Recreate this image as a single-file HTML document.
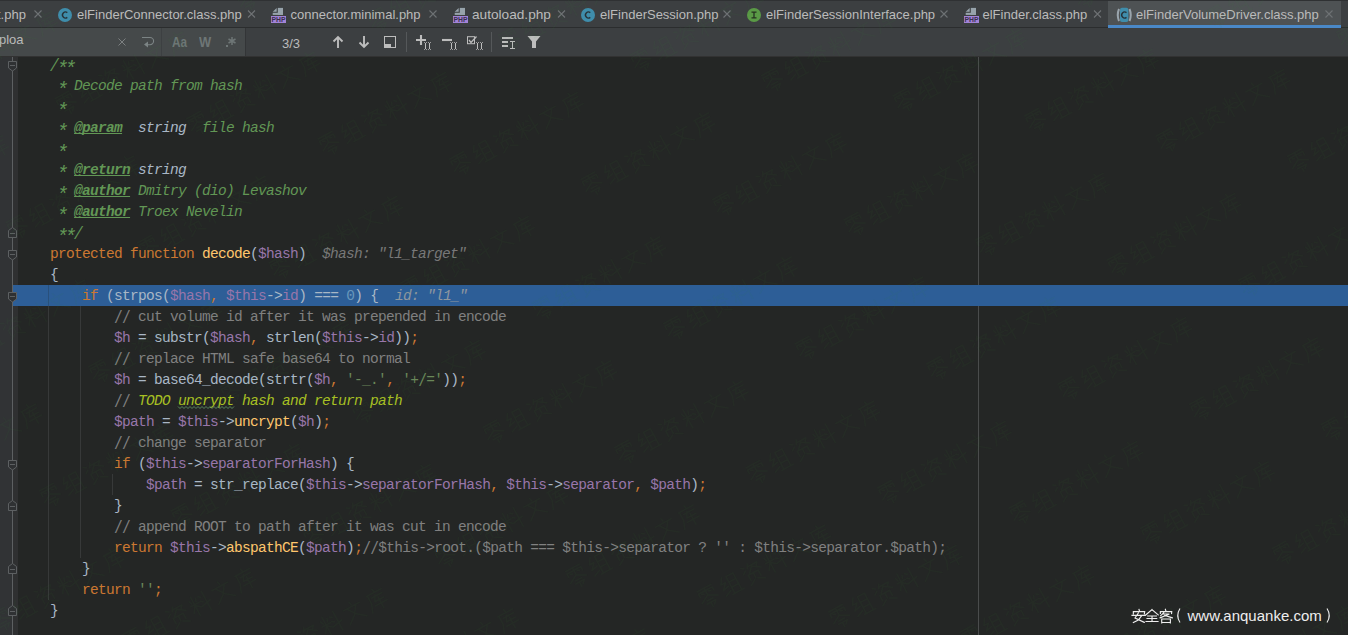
<!DOCTYPE html>
<html><head><meta charset="utf-8">
<style>
*{margin:0;padding:0;box-sizing:border-box}
html,body{width:1348px;height:635px;overflow:hidden;background:#242625}
body{position:relative;font-family:"Liberation Sans",sans-serif}
.abs{position:absolute}
#tabs{left:0;top:0;width:1348px;height:28px;background:#3C3F41;border-top:1px solid #2F3133}
#tabsep{left:0;top:27px;width:1348px;height:1px;background:#2B2D2E}
.tt{position:absolute;top:6px;font-size:13px;line-height:16px;color:#BBBBBB;white-space:pre}
.x{position:absolute;top:10px;width:8px;height:8px}
#search{left:0;top:28px;width:1348px;height:28px;background:#3C3F41}
#sfield{left:0;top:28px;width:245px;height:28px;background:#45494A}
#editor{left:0;top:56px;width:1348px;height:579px;background:#242625}
#gutter{left:0;top:56px;width:18px;height:579px;background:#313335}
#gutter2{left:13px;top:56px;width:5px;height:579px;background:#2F3031}
#margin{left:978px;top:56px;width:1px;height:579px;background:#4A4C4C}
#hl{left:13px;top:285px;width:1335px;height:21px;background:#2D5E97}
.ln{position:absolute;left:50px;height:21px;font-family:"Liberation Mono",monospace;font-size:14.5px;letter-spacing:-0.7px;line-height:21px;white-space:pre;color:#A9B7C6}
.k{color:#CC7832}.v{color:#9876AA}.f{color:#FFC66D}.n{color:#6897BB}.s{color:#6A8759}
.c{color:#808080}.d{color:#629755;font-style:italic}.dt{color:#629755;font-weight:bold;text-decoration:underline;text-decoration-skip-ink:none;text-underline-offset:1px;font-style:italic}
.dty{color:#A9B7C6;font-style:italic}.h{color:#787878;font-style:italic}.todo{color:#A8C023;font-style:italic}
.ast{display:inline-block;font-weight:normal;transform:translateY(5px) scale(1.35)}
.sl{display:inline-block;font-weight:normal;transform:translateY(1px) scaleY(1.28)}
.guide{position:absolute;width:1px;background:#373939}
</style></head><body>
<div id="tabs" class="abs"></div>
<div id="tabsep" class="abs"></div>
<div id="search" class="abs"></div>
<div id="sfield" class="abs"></div>
<!--CHROME-->
<div class="abs" style="left:1108px;top:1px;width:233px;height:26px;background:#4E5254"></div>
<div class="abs" style="left:1108px;top:25px;width:233px;height:3px;background:#4A88C7"></div>
<div class="tt" style="left:-3px;top:7px;font-size:13px;color:#BBBBBB;">t.php</div>
<div class="tt" style="left:77px;top:7px;font-size:13px;color:#BBBBBB;">elFinderConnector.class.php</div>
<div class="tt" style="left:290.5px;top:7px;font-size:13px;color:#BBBBBB;">connector.minimal.php</div>
<div class="tt" style="left:472px;top:7px;font-size:13px;color:#BBBBBB;transform:scaleX(1.05);transform-origin:0 0">autoload.php</div>
<div class="tt" style="left:600px;top:7px;font-size:13px;color:#BBBBBB;">elFinderSession.php</div>
<div class="tt" style="left:766px;top:7px;font-size:13px;color:#BBBBBB;">elFinderSessionInterface.php</div>
<div class="tt" style="left:982.5px;top:7px;font-size:13px;color:#BBBBBB;">elFinder.class.php</div>
<div class="tt" style="left:1136px;top:7px;font-size:13px;color:#BBBBBB;">elFinderVolumeDriver.class.php</div>
<svg class="abs" style="left:0;top:0" width="1348" height="56"><path d="M34.5 10.5 L41.5 17.5 M41.5 10.5 L34.5 17.5" stroke="#6E7274" stroke-width="1.1"/><path d="M248.0 10.5 L255.0 17.5 M255.0 10.5 L248.0 17.5" stroke="#6E7274" stroke-width="1.1"/><path d="M429.5 10.5 L436.5 17.5 M436.5 10.5 L429.5 17.5" stroke="#6E7274" stroke-width="1.1"/><path d="M558.0 10.5 L565.0 17.5 M565.0 10.5 L558.0 17.5" stroke="#6E7274" stroke-width="1.1"/><path d="M723.5 10.5 L730.5 17.5 M730.5 10.5 L723.5 17.5" stroke="#6E7274" stroke-width="1.1"/><path d="M940.5 10.5 L947.5 17.5 M947.5 10.5 L940.5 17.5" stroke="#6E7274" stroke-width="1.1"/><path d="M1094.0 10.5 L1101.0 17.5 M1101.0 10.5 L1094.0 17.5" stroke="#6E7274" stroke-width="1.1"/><path d="M1325.5 10.5 L1332.5 17.5 M1332.5 10.5 L1325.5 17.5" stroke="#6E7274" stroke-width="1.1"/><circle cx="65" cy="15" r="7" fill="#3F8DAB"/><path d="M67.3 12.6 A3 3 0 1 0 67.3 17.4" stroke="#263238" stroke-width="1.4" fill="none"/><circle cx="588" cy="15" r="7" fill="#3F8DAB"/><path d="M590.3 12.6 A3 3 0 1 0 590.3 17.4" stroke="#263238" stroke-width="1.4" fill="none"/><path d="M272.7 11.7 L276.7 7.9 L276.7 11.7 Z" fill="#97A3AB"/><rect x="277.8" y="7.9" width="5.2" height="7" fill="#97A3AB"/><rect x="272.7" y="12.8" width="10.3" height="2.1" fill="#97A3AB"/><rect x="271" y="16" width="15" height="7" fill="#A283D6"/><text x="278.5" y="22.3" font-family="Liberation Sans" font-weight="bold" font-size="7.6" fill="#3A3050" text-anchor="middle" textLength="14" lengthAdjust="spacingAndGlyphs">PHP</text><path d="M454.7 11.7 L458.7 7.9 L458.7 11.7 Z" fill="#97A3AB"/><rect x="459.8" y="7.9" width="5.2" height="7" fill="#97A3AB"/><rect x="454.7" y="12.8" width="10.3" height="2.1" fill="#97A3AB"/><rect x="453" y="16" width="15" height="7" fill="#A283D6"/><text x="460.5" y="22.3" font-family="Liberation Sans" font-weight="bold" font-size="7.6" fill="#3A3050" text-anchor="middle" textLength="14" lengthAdjust="spacingAndGlyphs">PHP</text><path d="M965.7 11.7 L969.7 7.9 L969.7 11.7 Z" fill="#97A3AB"/><rect x="970.8" y="7.9" width="5.2" height="7" fill="#97A3AB"/><rect x="965.7" y="12.8" width="10.3" height="2.1" fill="#97A3AB"/><rect x="964" y="16" width="15" height="7" fill="#A283D6"/><text x="971.5" y="22.3" font-family="Liberation Sans" font-weight="bold" font-size="7.6" fill="#3A3050" text-anchor="middle" textLength="14" lengthAdjust="spacingAndGlyphs">PHP</text><circle cx="754" cy="15" r="7" fill="#5A9A46"/><path d="M751.5 12.2 H756.5 M751.5 17.8 H756.5 M754 12.2 V17.8" stroke="#263221" stroke-width="1.3"/><path d="M1119 9 Q1116.5 15 1119 21" stroke="#9AA5AD" stroke-width="2" fill="none"/><path d="M1129.5 9 Q1132 15 1129.5 21" stroke="#9AA5AD" stroke-width="2" fill="none"/><rect x="1120" y="7.8" width="8.4" height="14.2" rx="2" fill="#3F8DAB"/><path d="M1126.5 12.6 A3 3 0 1 0 1126.5 17.4" stroke="#263238" stroke-width="1.4" fill="none"/><path d="M118.5 38.5 L125.5 45.5 M125.5 38.5 L118.5 45.5" stroke="#7C8081" stroke-width="1"/><path d="M142 37.5 H150 A3.6 3.6 0 0 1 150 44.7 H147" stroke="#7C8485" stroke-width="1.1" fill="none"/><path d="M144 44.5 L148 41.5 L148 47.6 Z" fill="#7C8485"/><rect x="161" y="28" width="1" height="28" fill="#3D4042"/><rect x="226" y="45" width="2" height="2" fill="#6E7676"/><path d="M232 37 V45 M228.5 39 L235.5 43 M235.5 39 L228.5 43" stroke="#6E7676" stroke-width="1.5"/><rect x="245" y="28" width="1" height="28" fill="#333537"/><path d="M338 36.5 V48 M333.5 41.5 L338 37 L342.5 41.5" stroke="#BDBDBD" stroke-width="1.9" fill="none"/><path d="M364 36 V47.5 M359.5 42.5 L364 47 L368.5 42.5" stroke="#BDBDBD" stroke-width="1.9" fill="none"/><rect x="384.5" y="36.5" width="11" height="11" stroke="#BDBDBD" stroke-width="1" fill="none"/><rect x="384" y="44" width="7" height="4" fill="#BDBDBD"/><rect x="406" y="32" width="1" height="20" fill="#55585A"/><path d="M416 40 H426 M421 35 V45" stroke="#BDBDBD" stroke-width="2.1"/><rect x="425" y="43" width="1" height="6" fill="#BDBDBD"/><rect x="424" y="42" width="1" height="1" fill="#BDBDBD" fill-opacity="0.75"/><rect x="424" y="49" width="1" height="1" fill="#BDBDBD" fill-opacity="0.75"/><rect x="426" y="42" width="1" height="1" fill="#BDBDBD" fill-opacity="0.75"/><rect x="426" y="49" width="1" height="1" fill="#BDBDBD" fill-opacity="0.75"/><rect x="429" y="43" width="1" height="6" fill="#BDBDBD"/><rect x="428" y="42" width="1" height="1" fill="#BDBDBD" fill-opacity="0.75"/><rect x="428" y="49" width="1" height="1" fill="#BDBDBD" fill-opacity="0.75"/><rect x="430" y="42" width="1" height="1" fill="#BDBDBD" fill-opacity="0.75"/><rect x="430" y="49" width="1" height="1" fill="#BDBDBD" fill-opacity="0.75"/><path d="M442 40 H452" stroke="#BDBDBD" stroke-width="2.1"/><rect x="451" y="43" width="1" height="6" fill="#BDBDBD"/><rect x="450" y="42" width="1" height="1" fill="#BDBDBD" fill-opacity="0.75"/><rect x="450" y="49" width="1" height="1" fill="#BDBDBD" fill-opacity="0.75"/><rect x="452" y="42" width="1" height="1" fill="#BDBDBD" fill-opacity="0.75"/><rect x="452" y="49" width="1" height="1" fill="#BDBDBD" fill-opacity="0.75"/><rect x="455" y="43" width="1" height="6" fill="#BDBDBD"/><rect x="454" y="42" width="1" height="1" fill="#BDBDBD" fill-opacity="0.75"/><rect x="454" y="49" width="1" height="1" fill="#BDBDBD" fill-opacity="0.75"/><rect x="456" y="42" width="1" height="1" fill="#BDBDBD" fill-opacity="0.75"/><rect x="456" y="49" width="1" height="1" fill="#BDBDBD" fill-opacity="0.75"/><rect x="467.5" y="36.7" width="7" height="7" stroke="#BDBDBD" stroke-width="1" fill="none"/><path d="M469 40 L471 42.5 L476.5 36.5" stroke="#BDBDBD" stroke-width="1.3" fill="none"/><rect x="477" y="43" width="1" height="6" fill="#BDBDBD"/><rect x="476" y="42" width="1" height="1" fill="#BDBDBD" fill-opacity="0.75"/><rect x="476" y="49" width="1" height="1" fill="#BDBDBD" fill-opacity="0.75"/><rect x="478" y="42" width="1" height="1" fill="#BDBDBD" fill-opacity="0.75"/><rect x="478" y="49" width="1" height="1" fill="#BDBDBD" fill-opacity="0.75"/><rect x="481" y="43" width="1" height="6" fill="#BDBDBD"/><rect x="480" y="42" width="1" height="1" fill="#BDBDBD" fill-opacity="0.75"/><rect x="480" y="49" width="1" height="1" fill="#BDBDBD" fill-opacity="0.75"/><rect x="482" y="42" width="1" height="1" fill="#BDBDBD" fill-opacity="0.75"/><rect x="482" y="49" width="1" height="1" fill="#BDBDBD" fill-opacity="0.75"/><rect x="491" y="32" width="1" height="20" fill="#55585A"/><rect x="502" y="37" width="11" height="2" fill="#BDBDBD"/><rect x="502" y="41" width="6" height="2" fill="#BDBDBD"/><rect x="502" y="45" width="6" height="2" fill="#BDBDBD"/><path d="M510 41.5 H515 M510 48.5 H515 M512.5 41.5 V48.5" stroke="#BDBDBD" stroke-width="1" fill="none"/><path d="M527.5 36 H540.5 L536 41.5 V48 H532 V41.5 Z" fill="#BDBDBD"/></svg>
<div class="tt" style="left:0px;top:32px;font-size:13px;color:#BBBBBB;left:-1px">ploa</div>
<div class="tt" style="left:172px;top:34px;font-size:14px;color:#6E7676;font-weight:bold;transform:scaleX(0.84);transform-origin:0 0">Aa</div>
<div class="tt" style="left:199px;top:34px;font-size:14px;color:#6E7676;font-weight:bold;transform:scaleX(0.92);transform-origin:0 0">W</div>
<div class="tt" style="left:282px;top:35.5px;font-size:13px;color:#BBBBBB;">3/3</div>
<!--/CHROME-->
<div id="editor" class="abs"></div>
<div id="gutter" class="abs"></div>
<div id="gutter2" class="abs"></div>
<div id="margin" class="abs"></div>
<div id="hl" class="abs"></div>
<div class="abs" style="left:0;top:56px;width:1348px;height:1px;background:#323232"></div>
<!--GUTTER-->
<svg class="abs" style="left:0;top:0" width="20" height="635"><rect x="12" y="57" width="1" height="578" fill="#5D6062"/><path d="M8.5 61.5 H16.5 V68 L12.5 71 L8.5 68 Z" fill="#2F3133" stroke="#5D6062" stroke-width="1"/><rect x="10" y="65" width="5" height="1" fill="#5D6062"/><path d="M8.5 250.5 H16.5 V257 L12.5 260 L8.5 257 Z" fill="#2F3133" stroke="#5D6062" stroke-width="1"/><rect x="10" y="254" width="5" height="1" fill="#5D6062"/><path d="M8.5 292.5 H16.5 V299 L12.5 302 L8.5 299 Z" fill="#2F3133" stroke="#5D6062" stroke-width="1"/><rect x="10" y="296" width="5" height="1" fill="#5D6062"/><path d="M8.5 460.5 H16.5 V467 L12.5 470 L8.5 467 Z" fill="#2F3133" stroke="#5D6062" stroke-width="1"/><rect x="10" y="464" width="5" height="1" fill="#5D6062"/><path d="M8.5 237.5 H16.5 V230.5 L12.5 227.5 L8.5 230.5 Z" fill="#2F3133" stroke="#5D6062" stroke-width="1"/><rect x="10" y="233" width="5" height="1" fill="#5D6062"/><path d="M8.5 510.5 H16.5 V503.5 L12.5 500.5 L8.5 503.5 Z" fill="#2F3133" stroke="#5D6062" stroke-width="1"/><rect x="10" y="506" width="5" height="1" fill="#5D6062"/><path d="M8.5 573.5 H16.5 V566.5 L12.5 563.5 L8.5 566.5 Z" fill="#2F3133" stroke="#5D6062" stroke-width="1"/><rect x="10" y="569" width="5" height="1" fill="#5D6062"/><path d="M8.5 615.5 H16.5 V608.5 L12.5 605.5 L8.5 608.5 Z" fill="#2F3133" stroke="#5D6062" stroke-width="1"/><rect x="10" y="611" width="5" height="1" fill="#5D6062"/></svg>
<div class="guide" style="left:48px;top:306px;height:294px;background:#373939"></div>
<div class="guide" style="left:48px;top:285px;height:21px;background:#29507C"></div>
<div class="guide" style="left:80px;top:306px;height:252px;background:#373939"></div>
<div class="guide" style="left:112px;top:474px;height:21px;background:#373939"></div>
<!--/GUTTER-->
<!--CODE-->
<div class="ln" style="top:55px"><span class="d"><b class="sl">/</b><b class="ast">*</b><b class="ast">*</b></span></div>
<div class="ln" style="top:76px"><span class="d"> <b class="ast">*</b> Decode path from hash</span></div>
<div class="ln" style="top:97px"><span class="d"> <b class="ast">*</b></span></div>
<div class="ln" style="top:118px"><span class="d"> <b class="ast">*</b> </span><span class="dt">@param</span><span class="d">  </span><span class="dty">string</span><span class="d">  file hash</span></div>
<div class="ln" style="top:139px"><span class="d"> <b class="ast">*</b></span></div>
<div class="ln" style="top:160px"><span class="d"> <b class="ast">*</b> </span><span class="dt">@return</span><span class="d"> </span><span class="dty">string</span></div>
<div class="ln" style="top:181px"><span class="d"> <b class="ast">*</b> </span><span class="dt">@author</span><span class="d"> Dmitry (dio) Levashov</span></div>
<div class="ln" style="top:202px"><span class="d"> <b class="ast">*</b> </span><span class="dt">@author</span><span class="d"> Troex Nevelin</span></div>
<div class="ln" style="top:223px"><span class="d"> <b class="ast">*</b><b class="ast">*</b><b class="sl">/</b></span></div>
<div class="ln" style="top:244px"><span class="k">protected function </span><span class="f">decode</span>(<span class="v">$hash</span>)</div>
<div class="ln h" style="top:244px;left:322px">$hash: &quot;l1_target&quot;</div>
<div class="ln" style="top:265px">{</div>
<div class="ln" style="top:286px">    <span class="k">if </span>(strpos(<span class="v">$hash</span><span class="k">, </span><span class="v">$this</span>-&gt;<span class="v">id</span>) === <span class="n">0</span>) {</div>
<div class="ln h" style="top:286px;left:395px;color:#8F979F">id: &quot;l1_&quot;</div>
<div class="ln" style="top:307px"><span class="c">        <b class="sl">/</b><b class="sl">/</b> cut volume id after it was prepended in encode</span></div>
<div class="ln" style="top:328px">        <span class="v">$h</span> = substr(<span class="v">$hash</span><span class="k">, </span>strlen(<span class="v">$this</span>-&gt;<span class="v">id</span>))<span class="k">;</span></div>
<div class="ln" style="top:349px"><span class="c">        <b class="sl">/</b><b class="sl">/</b> replace HTML safe base64 to normal</span></div>
<div class="ln" style="top:370px">        <span class="v">$h</span> = base64_decode(strtr(<span class="v">$h</span><span class="k">, </span><span class="s">&#x27;-_.&#x27;</span><span class="k">, </span><span class="s">&#x27;+<b class="sl">/</b>=&#x27;</span>))<span class="k">;</span></div>
<div class="ln" style="top:391px"><span class="c">        <b class="sl">/</b><b class="sl">/</b> </span><span class="todo">TODO </span><span class="todo wavy">uncrypt</span><span class="todo"> hash and return path</span></div>
<div class="ln" style="top:412px">        <span class="v">$path</span> = <span class="v">$this</span>-&gt;<span class="f">uncrypt</span>(<span class="v">$h</span>)<span class="k">;</span></div>
<div class="ln" style="top:433px"><span class="c">        <b class="sl">/</b><b class="sl">/</b> change separator</span></div>
<div class="ln" style="top:454px">        <span class="k">if </span>(<span class="v">$this</span>-&gt;<span class="v">separatorForHash</span>) {</div>
<div class="ln" style="top:475px">            <span class="v">$path</span> = str_replace(<span class="v">$this</span>-&gt;<span class="v">separatorForHash</span><span class="k">, </span><span class="v">$this</span>-&gt;<span class="v">separator</span><span class="k">, </span><span class="v">$path</span>)<span class="k">;</span></div>
<div class="ln" style="top:496px">        }</div>
<div class="ln" style="top:517px"><span class="c">        <b class="sl">/</b><b class="sl">/</b> append ROOT to path after it was cut in encode</span></div>
<div class="ln" style="top:538px">        <span class="k">return </span><span class="v">$this</span>-&gt;<span class="f">abspathCE</span>(<span class="v">$path</span>)<span class="k">;</span><span class="c"><b class="sl">/</b><b class="sl">/</b>$this-&gt;root.($path === $this-&gt;separator ? &#x27;&#x27; : $this-&gt;separator.$path);</span></div>
<div class="ln" style="top:559px">    }</div>
<div class="ln" style="top:580px">    <span class="k">return </span><span class="s">&#x27;&#x27;</span><span class="k">;</span></div>
<div class="ln" style="top:601px">}</div>
<!--/CODE-->
<!--WM-->
<svg class="abs" style="left:0;top:0;pointer-events:none" width="1348" height="635"><defs><path id="wm" d="M-7.8 -9.5 L7.8 -9.5 M0.0 -9.5 L0.0 -2.8 M-7.8 -2.8 L-7.8 -6.7 L7.8 -6.7 L7.8 -2.8 M-5.0 -5.0 L-2.8 -4.1 M2.8 -5.0 L5.0 -4.1 M0.0 -1.7 L-9.0 3.4 M0.0 -1.7 L9.0 3.4 M-3.4 3.4 L3.4 3.4 M-5.0 6.2 L5.0 6.2 L1.7 9.5 M-0.6 6.2 L-0.6 11.2 M20.3 -10.1 L16.3 -3.9 L21.4 -3.9 L15.8 2.2 L22.5 0.6 M15.8 8.4 L22.5 5.6 M24.7 -9.0 L32.6 -9.0 L32.6 9.5 M24.7 -9.0 L24.7 9.5 M24.7 -2.8 L32.6 -2.8 M24.7 3.1 L32.6 3.1 M22.5 9.9 L35.4 9.9 M41.6 -9.0 L44.4 -7.3 M41.1 -2.2 L44.4 -4.5 M49.5 -10.1 L47.2 -5.6 M48.4 -7.3 L59.0 -7.3 L56.8 -4.5 M52.8 -6.7 L47.2 -0.6 M52.8 -5.6 L60.1 -0.6 M45.0 0.6 L56.2 0.6 L56.2 6.7 M45.0 0.6 L45.0 6.7 M50.6 1.7 L50.6 6.2 M48.9 7.3 L42.8 11.0 M52.3 7.3 L59.0 11.0 M66.9 -6.7 L68.1 -3.4 M74.2 -6.7 L73.1 -3.4 M65.8 -1.3 L75.3 -1.3 M70.3 -10.1 L70.3 10.6 M70.3 -0.6 L65.8 6.2 M70.9 0.0 L74.8 3.4 M77.0 -6.7 L79.3 -5.0 M77.0 -1.7 L79.3 0.0 M75.9 3.9 L86.5 1.7 M82.6 -10.1 L82.6 11.0 M101.2 -10.3 L102.1 -7.3 M92.2 -5.4 L110.2 -5.4 M96.7 -4.5 L102.3 3.4 L110.7 10.1 M105.7 -4.5 L100.1 3.4 L91.7 10.1 M127.6 -10.6 L128.3 -8.1 M119.2 -6.9 L136.0 -6.9 M120.3 -6.9 L120.3 2.2 L117.0 10.6 M123.1 -3.1 L134.9 -3.1 M127.6 -4.5 L124.3 1.7 L134.3 1.7 M122.6 5.6 L136.0 5.6 M129.3 -1.1 L129.3 11.2" fill="none" stroke="#3C9A3C" stroke-opacity="0.055" stroke-width="1.5" stroke-linecap="round" stroke-linejoin="round"/></defs><use href="#wm" transform="translate(1085.0 -3.4) rotate(-28.6)"/><use href="#wm" transform="translate(1216.5 16.8) rotate(-28.6)"/><use href="#wm" transform="translate(1348.0 37.0) rotate(-28.6)"/><use href="#wm" transform="translate(247.0 -0.6) rotate(-28.6)"/><use href="#wm" transform="translate(378.5 19.6) rotate(-28.6)"/><use href="#wm" transform="translate(510.0 39.8) rotate(-28.6)"/><use href="#wm" transform="translate(641.5 60.0) rotate(-28.6)"/><use href="#wm" transform="translate(773.0 80.2) rotate(-28.6)"/><use href="#wm" transform="translate(904.5 100.4) rotate(-28.6)"/><use href="#wm" transform="translate(1036.0 120.6) rotate(-28.6)"/><use href="#wm" transform="translate(1167.5 140.8) rotate(-28.6)"/><use href="#wm" transform="translate(1299.0 161.0) rotate(-28.6)"/><use href="#wm" transform="translate(-65.0 83.0) rotate(-28.6)"/><use href="#wm" transform="translate(66.5 103.2) rotate(-28.6)"/><use href="#wm" transform="translate(198.0 123.4) rotate(-28.6)"/><use href="#wm" transform="translate(329.5 143.6) rotate(-28.6)"/><use href="#wm" transform="translate(461.0 163.8) rotate(-28.6)"/><use href="#wm" transform="translate(592.5 184.0) rotate(-28.6)"/><use href="#wm" transform="translate(724.0 204.2) rotate(-28.6)"/><use href="#wm" transform="translate(855.5 224.4) rotate(-28.6)"/><use href="#wm" transform="translate(987.0 244.6) rotate(-28.6)"/><use href="#wm" transform="translate(1118.5 264.8) rotate(-28.6)"/><use href="#wm" transform="translate(1250.0 285.0) rotate(-28.6)"/><use href="#wm" transform="translate(-114.0 207.0) rotate(-28.6)"/><use href="#wm" transform="translate(17.5 227.2) rotate(-28.6)"/><use href="#wm" transform="translate(149.0 247.4) rotate(-28.6)"/><use href="#wm" transform="translate(280.5 267.6) rotate(-28.6)"/><use href="#wm" transform="translate(412.0 287.8) rotate(-28.6)"/><use href="#wm" transform="translate(543.5 308.0) rotate(-28.6)"/><use href="#wm" transform="translate(675.0 328.2) rotate(-28.6)"/><use href="#wm" transform="translate(806.5 348.4) rotate(-28.6)"/><use href="#wm" transform="translate(938.0 368.6) rotate(-28.6)"/><use href="#wm" transform="translate(1069.5 388.8) rotate(-28.6)"/><use href="#wm" transform="translate(1201.0 409.0) rotate(-28.6)"/><use href="#wm" transform="translate(1332.5 429.2) rotate(-28.6)"/><use href="#wm" transform="translate(-31.5 351.2) rotate(-28.6)"/><use href="#wm" transform="translate(100.0 371.4) rotate(-28.6)"/><use href="#wm" transform="translate(231.5 391.6) rotate(-28.6)"/><use href="#wm" transform="translate(363.0 411.8) rotate(-28.6)"/><use href="#wm" transform="translate(494.5 432.0) rotate(-28.6)"/><use href="#wm" transform="translate(626.0 452.2) rotate(-28.6)"/><use href="#wm" transform="translate(757.5 472.4) rotate(-28.6)"/><use href="#wm" transform="translate(889.0 492.6) rotate(-28.6)"/><use href="#wm" transform="translate(1020.5 512.8) rotate(-28.6)"/><use href="#wm" transform="translate(1152.0 533.0) rotate(-28.6)"/><use href="#wm" transform="translate(1283.5 553.2) rotate(-28.6)"/><use href="#wm" transform="translate(-80.5 475.2) rotate(-28.6)"/><use href="#wm" transform="translate(51.0 495.4) rotate(-28.6)"/><use href="#wm" transform="translate(182.5 515.6) rotate(-28.6)"/><use href="#wm" transform="translate(314.0 535.8) rotate(-28.6)"/><use href="#wm" transform="translate(445.5 556.0) rotate(-28.6)"/><use href="#wm" transform="translate(577.0 576.2) rotate(-28.6)"/><use href="#wm" transform="translate(708.5 596.4) rotate(-28.6)"/><use href="#wm" transform="translate(840.0 616.6) rotate(-28.6)"/><use href="#wm" transform="translate(971.5 636.8) rotate(-28.6)"/><use href="#wm" transform="translate(1103.0 657.0) rotate(-28.6)"/><use href="#wm" transform="translate(1234.5 677.2) rotate(-28.6)"/><use href="#wm" transform="translate(-129.5 599.2) rotate(-28.6)"/><use href="#wm" transform="translate(2.0 619.4) rotate(-28.6)"/><use href="#wm" transform="translate(133.5 639.6) rotate(-28.6)"/><use href="#wm" transform="translate(265.0 659.8) rotate(-28.6)"/><use href="#wm" transform="translate(396.5 680.0) rotate(-28.6)"/><use href="#wm" transform="translate(528.0 700.2) rotate(-28.6)"/></svg>
<!--/WM-->
<!--EXTRA-->
<svg class="abs" style="left:0;top:0" width="300" height="420"><path d="M178.0 406.5 L180.0 408.5 L182.0 406.5 L184.0 408.5 L186.0 406.5 L188.0 408.5 L190.0 406.5 L192.0 408.5 L194.0 406.5 L196.0 408.5 L198.0 406.5 L200.0 408.5 L202.0 406.5 L204.0 408.5 L206.0 406.5 L208.0 408.5 L210.0 406.5 L212.0 408.5 L214.0 406.5 L216.0 408.5 L218.0 406.5 L220.0 408.5 L222.0 406.5 L224.0 408.5 L226.0 406.5 L228.0 408.5 L230.0 406.5 L232.0 408.5 L234.0 406.5" stroke="#5F8F66" stroke-width="0.9" fill="none"/></svg>
<svg class="abs" style="left:0;top:0" width="1348" height="635"><path d="M1139.01 609.34 L1139.51 611.17 M1133.34 613.85 L1133.34 611.68 L1144.69 611.68 L1144.35 613.85 M1132.00 615.35 L1145.35 615.35 M1138.34 613.01 L1135.01 618.02 L1144.35 622.36 M1141.68 615.68 L1138.34 620.02 L1133.34 622.52 M1152.03 609.67 L1145.69 615.01 M1152.03 609.67 L1158.20 614.85 M1147.69 616.01 L1156.37 616.01 M1147.02 618.52 L1156.70 618.52 M1146.02 621.52 L1158.04 621.52 M1152.03 616.01 L1152.03 621.52 M1165.38 609.34 L1165.88 611.01 M1160.37 613.51 L1160.37 611.68 L1171.72 611.68 L1171.56 613.51 M1163.71 612.84 L1160.71 615.68 M1163.04 614.01 L1169.39 614.01 L1160.04 617.85 M1164.71 615.35 L1172.39 617.85 M1161.71 619.02 L1161.71 622.86 M1161.71 619.02 L1170.39 619.02 L1170.39 622.86 M1161.71 622.52 L1170.39 622.52" stroke="#EEEEEE" stroke-width="1.15" fill="none" stroke-linecap="square"/><path d="M1180 608.5 Q1175.5 615.5 1180 622.5" stroke="#EEEEEE" stroke-width="1.1" fill="none"/><path d="M1327 608.5 Q1331.5 615.5 1327 622.5" stroke="#EEEEEE" stroke-width="1.1" fill="none"/></svg>
<div class="abs" style="left:1187.5px;top:607px;font-size:15px;line-height:17px;color:#EEEEEE;white-space:pre">www.anquanke.com</div>
<!--/EXTRA-->
</body></html>
